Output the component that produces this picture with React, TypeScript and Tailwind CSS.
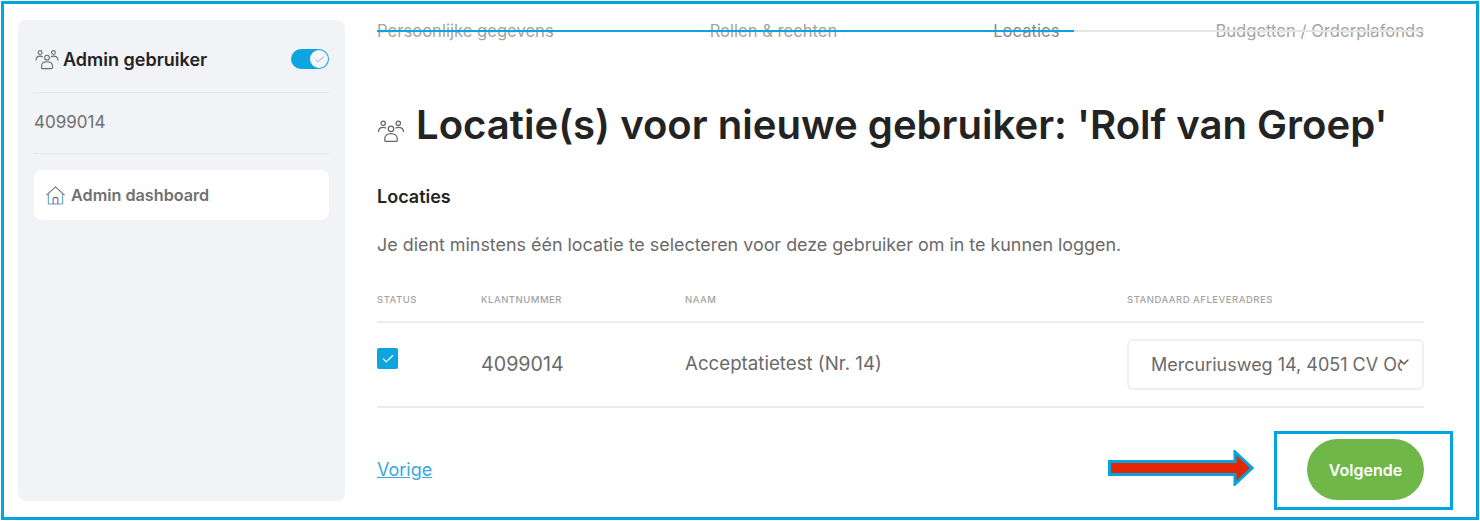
import { Check, ChevronDown } from 'lucide-react';

function UsersIcon({ className }: { className: string }) {
  return (
    <svg viewBox="0 0 26 24" fill="none" stroke="currentColor" strokeWidth="1.2" className={className} aria-hidden="true">
      <circle cx="5.5" cy="5" r="2.1" />
      <circle cx="20" cy="5" r="2.1" />
      <circle cx="13" cy="10.5" r="2.6" />
      <path d="M1 13.5c0-3 2-4.6 4.5-4.6 1.1 0 2 .3 2.8.9" />
      <path d="M25 13.5c0-3-2-4.6-5-4.6-1 0-1.900.3-2.700.9" />
      <path d="M7 21.500v-1.500c0-3 2.500-5 6-5s6 2 6 5v1.500c0 .6-.4 1-1 1H8c-.6 0-1-.4-1-1z" />
    </svg>
  );
}

function HomeIcon() {
  return (
    <svg viewBox="0 0 22 22" fill="none" strokeWidth="1.1" className="h-[21px] w-[21px] shrink-0" aria-hidden="true">
      <path d="M1.500 10.500 11 2l9.500 8.500" stroke="#6b6b6b" />
      <path d="M3.500 9.500V19c0 .6.400 1 1 1h13c.6 0 1-.4 1-1V9.500" stroke="#5a9fc9" />
      <path d="M8.500 20v-5.500c0-.8.500-1.300 1.300-1.300h2.400c.8 0 1.300.5 1.300 1.300V20" stroke="#6b6b6b" />
    </svg>
  );
}

const steps = ['Persoonlijke gegevens', 'Rollen & rechten', 'Locaties', 'Budgetten / Orderplafonds'];

export default function App() {
  return (
    <div className="h-[521px] w-[1480px] bg-white p-px font-['Inter','Noto_Sans',sans-serif]">
      <div className="relative flex h-full w-full gap-[32px] border-[3px] border-[#00a5e0] pb-[16px] pl-[14px] pr-[52px] pt-[16px]">
        <aside className="flex w-[327px] shrink-0 flex-col rounded-[8px] bg-[#f2f3f7] px-[16px]">
          <div className="flex h-[73px] items-center justify-between border-b border-[#e6e6e6] pt-[6px]">
            <div className="flex items-center gap-[3px]">
              <UsersIcon className="h-[22px] w-[26px] text-[#6b6b6b]" />
              <span className="text-[18px] font-semibold text-[#232323]">Admin gebruiker</span>
            </div>
            <div className="flex h-[20px] w-[38px] items-center justify-end rounded-full bg-[#0ea5de] pr-px">
              <span className="flex h-[18px] w-[18px] items-center justify-center rounded-full bg-[#f4f6fa]">
                <Check className="h-[11px] w-[11px] text-[#8fa8d8]" strokeWidth={2} />
              </span>
            </div>
          </div>
          <div className="flex h-[61px] items-center border-b border-[#e6e6e6] text-[17px] text-[#707070]">4099014</div>
          <div className="mt-[16px] flex h-[50px] items-center gap-[5px] rounded-[8px] bg-white pl-[11px] text-[16.200px] font-semibold text-[#707070]">
            <HomeIcon />
            <span>Admin dashboard</span>
          </div>
        </aside>

        <main className="flex min-w-0 flex-1 flex-col">
          <div className="relative mt-[1px] flex h-[20px] items-center justify-between text-[16.600px] text-[#a3a3a3]">
            {steps.map(step => (
              <span key={step} className={step === 'Locaties' ? 'text-[#8a8a8a]' : undefined}>{step}</span>
            ))}
            <div className="absolute inset-x-0 top-[9px] h-[2px] bg-[#e5e5e5]">
              <div className="h-full w-[697px] bg-[#0ea5de]" />
            </div>
          </div>

          <div className="mt-[54px] flex h-[60px] items-center gap-[11px]">
            <UsersIcon className="mt-[10px] h-[25px] w-[28px] shrink-0 text-[#666666]" />
            <h1 className="whitespace-nowrap text-[40.100px] font-semibold text-[#232323]">Locatie(s) voor nieuwe gebruiker: 'Rolf van Groep'</h1>
          </div>

          <h2 className="mt-[30px] text-[18px] font-semibold leading-[24px] text-[#232323]">Locaties</h2>
          <p className="mt-[24px] text-[17.900px] leading-[24px] text-[#6a6a6a]">Je dient minstens één locatie te selecteren voor deze gebruiker om in te kunnen loggen.</p>

          <div className="mt-[36px] grid h-[28px] grid-cols-[104px_204px_442px_1fr] text-[9.500px] font-medium uppercase tracking-[0.5px] text-[#a3a3a3]">
            <span>Status</span>
            <span>Klantnummer</span>
            <span>Naam</span>
            <span>Standaard afleveradres</span>
          </div>
          <div className="grid h-[87px] grid-cols-[104px_204px_442px_1fr] items-center border-y-2 border-[#ececec] text-[18.700px] text-[#6a6a6a]">
            <span className="flex h-[21px] w-[21px] -translate-y-[6px] items-center justify-center rounded-[2px] bg-[#0ea5de]">
              <Check className="h-[14px] w-[14px] text-white" strokeWidth={2} />
            </span>
            <span className="text-[19.700px]">4099014</span>
            <span>Acceptatietest (Nr. 14)</span>
            <div className="relative flex h-[51px] items-center overflow-hidden rounded-[6px] border-2 border-[#efefef] pl-[22px] pr-[20px] text-[18px]">
              <span className="overflow-hidden whitespace-nowrap">Mercuriusweg 14, 4051 CV Ochten</span>
              <ChevronDown className="absolute right-[10px] top-[13px] h-[16px] w-[16px] text-[#555555]" />
            </div>
          </div>

          <div className="mt-[31px] flex h-[61px] items-center justify-between">
            <a className="text-[18px] text-[#3aa8e0] underline">Vorige</a>
            <button className="flex h-[61px] w-[117px] items-center justify-center rounded-full bg-[#70b74a] text-[16px] font-semibold text-white">Volgende</button>
          </div>
        </main>

        {/* annotation over the screenshot */}
        <div className="absolute bottom-[7px] right-[23px] h-[79px] w-[179px] border-[3px] border-[#00a5e0]" />
        <svg viewBox="0 0 146 36" className="absolute bottom-[31px] right-[222px] h-[36px] w-[146px]" aria-hidden="true">
          <path d="M1.500 11.500H127V2l17 16-17 16v-9.500H1.500z" fill="#e62600" stroke="#00a5e0" strokeWidth="3" />
        </svg>
      </div>
    </div>
  );
}
